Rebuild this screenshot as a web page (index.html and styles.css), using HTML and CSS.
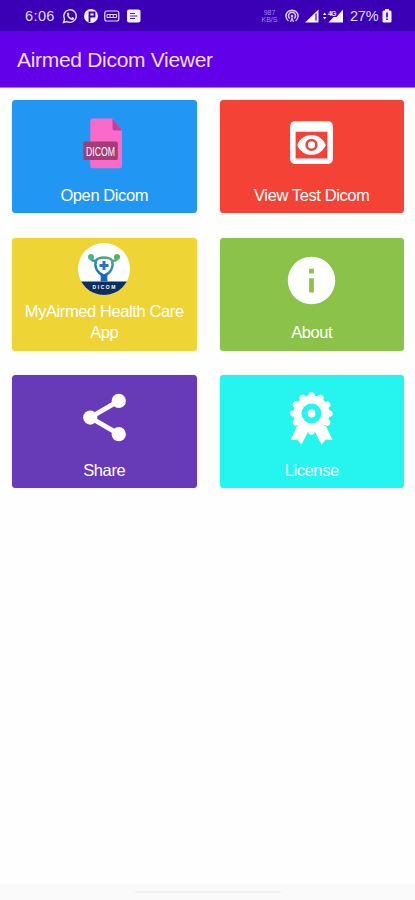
FILE: index.html
```html
<!DOCTYPE html>
<html lang="en">
<head>
<meta charset="utf-8">
<title>Airmed Dicom Viewer</title>
<link rel="stylesheet" href="styles.css">
</head>
<body>
<div class="status">
  <span class="time">6:06</span>
  <svg class="tray" width="79" height="16" viewBox="0 0 79 16" fill="none" stroke="#e4dcfa">
    <path d="M1.500 14.500l1-3.400a6.300 6.300 0 1 1 2.500 2.500z" stroke-width="1.400"/>
    <path d="M5.300 4.700l1.400.1.7 1.800-.8 1c.7 1.300 1.500 2 2.800 2.500l.9-1 1.800.9c.1 1.500-.8 2-1.900 2C7.500 11.500 4 8 5.300 4.700z" fill="#e4dcfa" stroke="none"/>
    <circle cx="29" cy="8" r="7" fill="#f5f0ff" stroke="none"/>
    <path d="M27.500 14V4.500h5v4H28" stroke="#3b00b6" stroke-width="1.800"/>
    <rect x="42.800" y="3" width="14" height="10" rx="2" stroke-width="1.200"/>
    <path d="M45 6.500h9.600v3H45zM48 6.500v3M51.300 6.500v3" stroke-width="1"/>
    <rect x="65" y="1.500" width="13.500" height="13" rx="2" fill="#f5f0ff" stroke="none"/>
    <path d="M68 5.500h5M68 8h7.500M68 10.500h5" stroke="#4b20b5" stroke-width="1.100"/>
  </svg>
  <span class="speed"><span>987</span><span>KB/S</span></span>
  <svg class="signal" width="58" height="16" viewBox="0 0 58 16" fill="none" stroke="#d9cdf6">
    <path d="M3.500 13a6 6 0 1 1 7 0M4.800 10.500a3.500 3.500 0 1 1 4.400 0" stroke-width="1.500"/>
    <circle cx="7" cy="8" r="1.300" fill="#d9cdf6" stroke="none"/><path d="M5.500 14l1.500-4 1.500 4" stroke-width="1.200"/>
    <path d="M33.500 1.500v13H20z" fill="#f5f0ff" stroke="none"/><path d="M31 5.500v7" stroke="#4318b7" stroke-width="1.300"/>
    <path d="M38 7l1.700-2.500L41.400 7zM38 9l1.700 2.500L41.400 9z" fill="#f5f0ff" stroke="none"/>
    <path d="M58 1.500v13H43.500l5-5.500h3z" fill="#f5f0ff" stroke="none"/>
    <text x="43" y="7.500" class="net">4G</text>
  </svg>
  <span class="percent">27%</span>
  <svg class="battery" width="10" height="14" viewBox="0 0 10 14">
    <path d="M3 0h4v1.500h1.200Q9.500 1.500 9.500 3v9.300q0 1.200-1.300 1.200H1.800Q.5 13.500.5 12.300V3q0-1.500 1.300-1.500H3z" fill="#f5f0ff"/>
    <path d="M5 3.500v5M5 9.500v1.500" stroke="#3b00b6" stroke-width="1.700"/>
  </svg>
</div>
<header class="appbar">Airmed Dicom Viewer</header>
<main class="grid">
  <a class="card blue">
    <svg class="icon" viewBox="0 0 57 57">
      <path d="M16.500 4.500h20l9.500 12V52q0 2.200-2.200 2.200H16.500q-2.200 0-2.200-2.200V6.700q0-2.200 2.200-2.200z" fill="#fa6bc9"/>
      <path d="M36.500 4.500l9.500 12h-7.500q-2 0-2-2z" fill="#c14099"/>
      <rect x="7.300" y="27.500" width="34.500" height="18.500" rx="1.500" fill="#a33c77"/>
      <text class="filetag" x="24.500" y="41.500" textLength="29" lengthAdjust="spacingAndGlyphs">DICOM</text>
    </svg>
    <span class="label">Open Dicom</span>
  </a>
  <a class="card red">
    <svg class="icon" viewBox="0 0 24 24">
      <path fill="#fff" fill-rule="evenodd" d="M19 3H5a2 2 0 0 0-2 2v14a2 2 0 0 0 2 2h14a2 2 0 0 0 2-2V5a2 2 0 0 0-2-2zm-.3 15.700H5.300V7.500h13.400z"/>
      <path fill="#fff" fill-rule="evenodd" d="M12 8.800c-2.730 0-5.060 1.700-6 4.200.94 2.500 3.270 4.200 6 4.200s5.060-1.700 6-4.200c-.94-2.500-3.270-4.200-6-4.200zm0 6.800a2.600 2.600 0 1 1 0-5.200 2.600 2.600 0 0 1 0 5.200z"/>
      <circle cx="12" cy="13" r="1.500" fill="#fff"/>
    </svg>
    <span class="label">View Test Dicom</span>
  </a>
  <a class="card yellow">
    <svg class="logo" viewBox="0 0 52 52">
      <defs>
        <clipPath id="disc"><circle cx="26" cy="26" r="26"/></clipPath>
        <linearGradient id="body" gradientUnits="userSpaceOnUse" x1="32" y1="13" x2="24" y2="34"><stop offset="0" stop-color="#4fb866"/><stop offset=".5" stop-color="#2f93a8"/><stop offset="1" stop-color="#1764b5"/></linearGradient>
      </defs>
      <g clip-path="url(#disc)">
        <path fill="#fff" d="M0 0h52v52H0z"/>
        <path fill="#0c2f5d" d="M0 38.500h52V52H0z"/>
        <path d="M13 16q2 2.500 5 1.500 2-3 8-3t8 3q3 1 5-1.500M18 17.500c-2 6 1 12 8 15.500 7-3.500 10-9.500 8-15.500" fill="none" stroke="url(#body)" stroke-width="2.600" stroke-linecap="round" stroke-linejoin="round"/>
        <path d="M22.500 31.500h7q-.5 3.500 0 7h-7q.5-3.500 0-7z" fill="#1768bd"/>
        <circle cx="13" cy="14" r="3" fill="#42b987"/><circle cx="39" cy="14" r="3" fill="#54b55f"/>
        <path d="M26 18v9M21.500 22.500h9" stroke="#2872c7" stroke-width="3"/>
        <text class="logotag" x="26" y="45.800" textLength="23">DICOM</text>
      </g>
    </svg>
    <span class="label">MyAirmed Health Care App</span>
  </a>
  <a class="card green">
    <svg class="icon" viewBox="0 0 24 24">
      <path fill="#fff" fill-rule="evenodd" d="M12 2a10 10 0 1 0 0 20 10 10 0 0 0 0-20zm1 15h-2v-6h2zm0-8h-2V7h2z"/>
    </svg>
    <span class="label">About</span>
  </a>
  <a class="card purple">
    <svg class="icon" viewBox="0 0 24 24" fill="#fff">
      <path d="M18 5L6 12l12 7" fill="none" stroke="#fff" stroke-width="2"/>
      <circle cx="18" cy="5" r="3"/><circle cx="6" cy="12" r="3"/><circle cx="18" cy="19" r="3"/>
    </svg>
    <span class="label">Share</span>
  </a>
  <a class="card cyan">
    <svg class="icon" viewBox="0 0 57 57" fill="#fff">
      <path d="M14 37L7.500 51l6.500-.5 4.500 5L26 41h5l7.500 14.500 4.500-5 6.500.5L43 37z"/>
      <circle cx="28.500" cy="24.500" r="14" fill="none" stroke="#fff" stroke-width="8"/>
      <circle class="scallop" cx="28.500" cy="24.500" r="18" pathLength="12"/>
      <circle cx="28.500" cy="24.500" r="3.900"/>
    </svg>
    <span class="label">License</span>
  </a>
</main>
<footer class="navbar"><span class="handle"></span></footer>
</body>
</html>
```
FILE: styles.css
```css
* { box-sizing: border-box; }
body {
  margin: 0;
  height: 900px;
  display: flex;
  flex-direction: column;
  overflow: hidden;
  background: #fefefe;
  font-family: "Liberation Sans", Arial, sans-serif;
}
.status {
  height: 31px;
  flex: none;
  display: flex;
  align-items: center;
  padding: 1px 23px 0 25px;
  background: #3b00b6;
  color: #e4dcfa;
}
.time { width: 37px; font-size: 14.5px; letter-spacing: 0.4px; }
.tray { flex: none; }
.speed {
  margin-left: auto;
  width: 17px;
  display: flex;
  flex-direction: column;
  align-items: center;
  font-size: 7px;
  line-height: 7px;
  color: #a08ae0;
}
.signal { flex: none; margin-left: 7px; }
.net { font-size: 7px; font-weight: bold; fill: #f5f0ff; stroke: none; letter-spacing: -0.8px; }
.percent { margin-left: 7px; width: 32px; font-size: 14.5px; letter-spacing: -0.2px; }
.battery { flex: none; }
.appbar {
  height: 57px;
  flex: none;
  padding-left: 17px;
  line-height: 58px;
  background: #6200ea;
  color: #eddfff;
  font-size: 21px;
  letter-spacing: -0.3px;
  border-bottom: 1px solid #a674f0;
}
.grid {
  flex: 1;
  display: grid;
  grid-template-columns: 184.5px 184.5px;
  grid-auto-rows: 113px;
  align-content: start;
  gap: 24.5px 23px;
  padding: 12px 11px 0 12px;
}
.card {
  display: flex;
  flex-direction: column;
  align-items: center;
  justify-content: space-between;
  padding: 5.5px 8px 6.5px;
  border-radius: 3.5px;
  box-shadow: 0 0 2px rgba(0, 0, 0, 0.12);
}
.blue { background: #2196f3; }
.red { background: #f44336; }
.yellow { background: #efd436; }
.green { background: #8bc34a; }
.purple { background: #673ab7; }
.cyan { background: #26f4ee; }
.icon { width: 57px; height: 57px; margin-top: 8.5px; }
.logo { width: 52px; height: 52px; }
.label {
  color: #fff;
  font-size: 16.5px;
  line-height: 21.7px;
  letter-spacing: -0.4px;
  text-align: center;
}
.filetag { font-size: 12.5px; fill: #fff; text-anchor: middle; }
.logotag { font-size: 5px; font-weight: bold; fill: #fff; text-anchor: middle; }
.scallop { fill: none; stroke: #fff; stroke-width: 6.4; stroke-linecap: round; stroke-dasharray: 0.01 0.99; }
.navbar {
  height: 16px;
  flex: none;
  display: flex;
  align-items: center;
  justify-content: center;
  background: #fafafa;
}
.handle { width: 146px; height: 2px; border-radius: 1px; background: #f0f0f0; }
```
